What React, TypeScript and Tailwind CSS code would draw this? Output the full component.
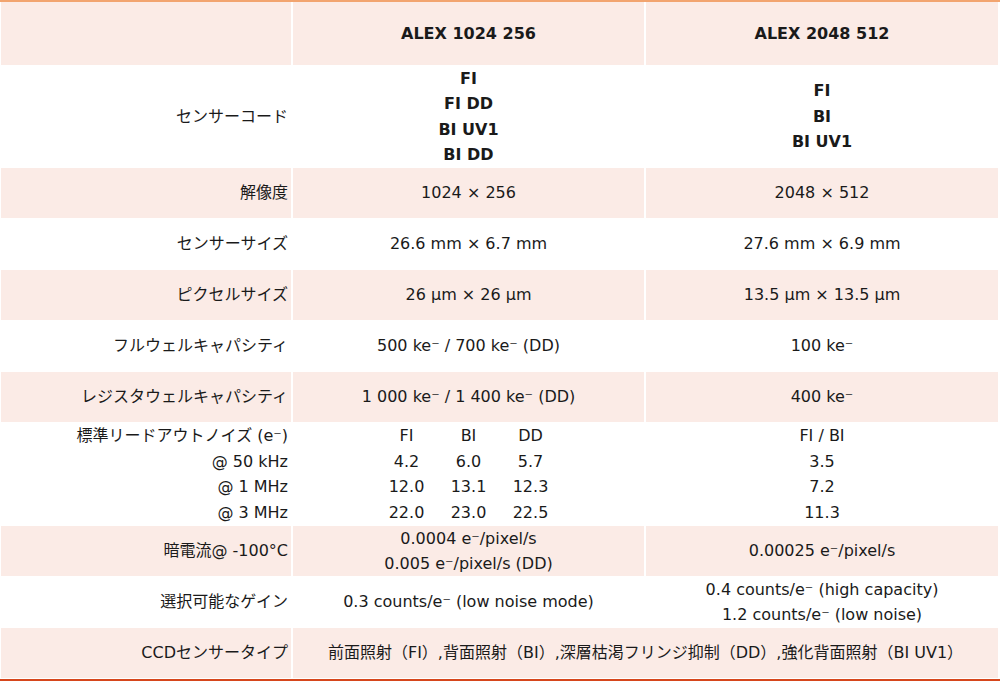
import React from 'react';

const PINK = 'bg-[#fbebe6]';
const WHITE = 'bg-white';

type Row = {
    label: React.ReactNode;
    a?: React.ReactNode;
    b?: React.ReactNode;
    span?: React.ReactNode;
    h: string;
};

const sup = '\u207B';

const Lines: React.FC<{ items: string[]; bold?: boolean }> = ({ items, bold }) => (
    <div className={bold ? 'font-bold' : ''}>
        {items.map((t, i) => (
            <div key={i}>{t}</div>
        ))}
    </div>
);

const rows: Row[] = [
    {
        label: 'センサーコード',
        a: <Lines bold items={['FI', 'FI DD', 'BI UV1', 'BI DD']} />,
        b: <Lines bold items={['FI', 'BI', 'BI UV1']} />,
        h: 'h-[101px]',
    },
    { label: '解像度', a: '1024 × 256', b: '2048 × 512', h: 'h-[50px]' },
    { label: 'センサーサイズ', a: '26.6 mm × 6.7 mm', b: '27.6 mm × 6.9 mm', h: 'h-[50px]' },
    { label: 'ピクセルサイズ', a: '26 µm × 26 µm', b: '13.5 µm × 13.5 µm', h: 'h-[50px]' },
    { label: 'フルウェルキャパシティ', a: `500 ke${sup} / 700 ke${sup} (DD)`, b: `100 ke${sup}`, h: 'h-[50px]' },
    { label: 'レジスタウェルキャパシティ', a: `1 000 ke${sup} / 1 400 ke${sup} (DD)`, b: `400 ke${sup}`, h: 'h-[50px]' },
    {
        label: <Lines items={[`標準リードアウトノイズ (e${sup})`, '@ 50 kHz', '@ 1 MHz', '@ 3 MHz']} />,
        a: (
            <div className="grid grid-cols-[62px_62px_62px] text-center">
                {['FI', 'BI', 'DD', '4.2', '6.0', '5.7', '12.0', '13.1', '12.3', '22.0', '23.0', '22.5'].map((t, i) => (
                    <div key={i}>{t}</div>
                ))}
            </div>
        ),
        b: <Lines items={['FI / BI', '3.5', '7.2', '11.3']} />,
        h: 'h-[102px]',
    },
    {
        label: '暗電流@ -100°C',
        a: <Lines items={[`0.0004 e${sup}/pixel/s`, `0.005 e${sup}/pixel/s (DD)`]} />,
        b: `0.00025 e${sup}/pixel/s`,
        h: 'h-[50px]',
    },
    {
        label: '選択可能なゲイン',
        a: `0.3 counts/e${sup} (low noise mode)`,
        b: <Lines items={[`0.4 counts/e${sup} (high capacity)`, `1.2 counts/e${sup} (low noise)`]} />,
        h: 'h-[50px]',
    },
    {
        label: 'CCDセンサータイプ',
        span: '前面照射（FI）,背面照射（BI）,深層枯渇フリンジ抑制（DD）,強化背面照射（BI UV1）',
        h: 'h-[50px]',
    },
];

export default function App() {
    return (
        <div className="w-[1000px] h-[681px] bg-white text-[#1a1a1a] text-[16px] leading-[25.5px] font-['DejaVu_Sans','Noto_Sans_CJK_JP',sans-serif]">
            <div className="border-t-2 border-b-2 border-t-[#f2a46f] border-b-[#d6461c] pb-px">
                <div className="grid grid-cols-[290px_351px_352px] gap-x-[2px] gap-y-px pl-px">
                    <div className={`${PINK} h-[63px]`} />
                    <div className={`${PINK} h-[63px] flex items-center justify-center font-bold`}>ALEX 1024 256</div>
                    <div className={`${PINK} h-[63px] flex items-center justify-center font-bold`}>ALEX 2048 512</div>
                    {rows.map((r, i) => {
                        const bg = i % 2 === 0 ? WHITE : PINK;
                        return (
                            <React.Fragment key={i}>
                                <div className={`${bg} ${r.h} flex items-center justify-end pr-[3px] text-right`}>{r.label}</div>
                                {r.span ? (
                                    <div className={`${bg} ${r.h} col-span-2 flex items-center justify-center`}>{r.span}</div>
                                ) : (
                                    <>
                                        <div className={`${bg} ${r.h} flex items-center justify-center text-center`}>{r.a}</div>
                                        <div className={`${bg} ${r.h} flex items-center justify-center text-center`}>{r.b}</div>
                                    </>
                                )}
                            </React.Fragment>
                        );
                    })}
                </div>
            </div>
        </div>
    );
}
